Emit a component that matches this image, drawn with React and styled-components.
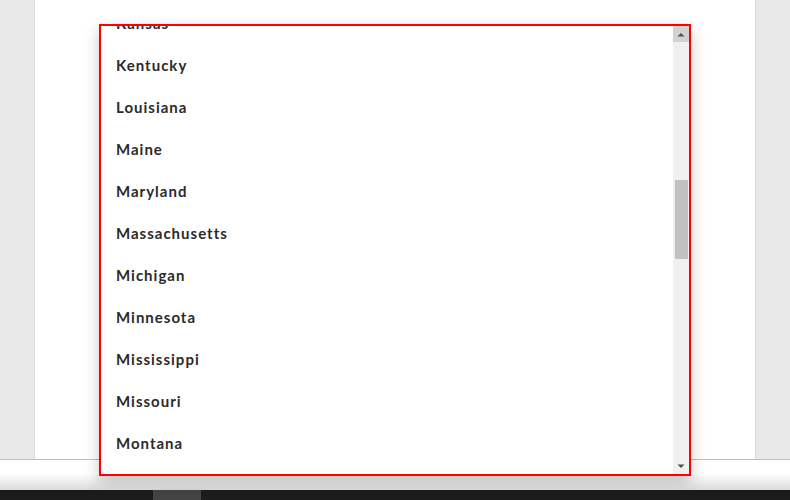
import React, { useLayoutEffect, useRef } from "react";
import styled, { createGlobalStyle } from "styled-components";

const Global = createGlobalStyle`
  html, body { margin: 0; padding: 0; }
  body { width: 790px; height: 500px; overflow: hidden; background: #ffffff; font-family: Lato, "Liberation Sans", sans-serif; }
`;

const Page = styled.div`
  position: relative;
  width: 790px;
  height: 500px;
  display: flex;
  flex-direction: column;
`;

const Stage = styled.div`
  height: 459px;
  background: #e9e9e9;
  display: flex;
  justify-content: center;
  border-bottom: 1px solid #bdbdbd;
`;

const Panel = styled.div`
  width: 720px;
  background: #ffffff;
  box-shadow: -1px 0 0 #dcdcdc, 1px 0 0 #dcdcdc;
`;

const Strip = styled.div`
  height: 30px;
  background: linear-gradient(to bottom, #ffffff 0%, #ffffff 45%, #dadada 100%);
`;

const Footer = styled.div`
  height: 10px;
  background: #1c1c1c;
  display: flex;
  padding-left: 153px;
`;

const FooterTab = styled.div`
  width: 48px;
  background: #444444;
`;

const Dropdown = styled.div`
  position: absolute;
  left: 99px;
  top: 24px;
  width: 588px;
  height: 448px;
  border: 2px solid #ff0000;
  background: #ffffff;
  box-shadow: 0 6px 14px rgba(0, 0, 0, 0.22);
  display: flex;
`;

const List = styled.ul`
  flex: 1;
  margin: 0;
  padding: 0;
  list-style: none;
  height: 100%;
  overflow: hidden;
`;

const Item = styled.li`
  height: 42px;
  display: flex;
  align-items: center;
  padding-left: 15px;
  font-family: Lato, "Liberation Sans", sans-serif;
  font-weight: 700;
  font-size: 15px;
  letter-spacing: 1px;
  color: #2b2b2b;
`;

const Scrollbar = styled.div`
  width: 16px;
  height: 100%;
  background: #f0f0f0;
  display: flex;
  flex-direction: column;
`;

const ArrowButton = styled.div`
  height: 16px;
  flex: none;
  display: flex;
  align-items: center;
  justify-content: center;
  background: ${(p) => (p.$active ? "#d2d2d2" : "#f0f0f0")};
`;

const Track = styled.div`
  flex: 1;
  position: relative;
`;

const Thumb = styled.div`
  position: absolute;
  left: 2px;
  right: 1px;
  background: #c1c1c1;
`;

const STATES = [
  "Alabama", "Alaska", "American Samoa", "Arizona", "Arkansas", "California",
  "Colorado", "Connecticut", "Delaware", "District of Columbia", "Florida",
  "Georgia", "Guam", "Hawaii", "Idaho", "Illinois", "Indiana", "Iowa", "Kansas",
  "Kentucky", "Louisiana", "Maine", "Maryland", "Massachusetts", "Michigan",
  "Minnesota", "Mississippi", "Missouri", "Montana", "Nebraska", "Nevada",
  "New Hampshire", "New Jersey", "New Mexico", "New York", "North Carolina",
  "North Dakota", "Northern Mariana Islands", "Ohio", "Oklahoma", "Oregon",
  "Pennsylvania", "Puerto Rico", "Rhode Island", "South Carolina", "South Dakota",
  "Tennessee", "Texas", "Utah", "Vermont", "Virgin Islands", "Virginia",
  "Washington", "West Virginia", "Wisconsin", "Wyoming",
];

const ITEM_H = 42;
const VIEW_H = 448;
const SCROLL = 780;
const TRACK_H = VIEW_H - 32;
const CONTENT_H = STATES.length * ITEM_H;
const THUMB_H = Math.round((TRACK_H * VIEW_H) / CONTENT_H);
const THUMB_TOP = Math.round(((TRACK_H - THUMB_H) * SCROLL) / (CONTENT_H - VIEW_H));

export default function App() {
  const listRef = useRef(null);
  useLayoutEffect(() => {
    if (listRef.current) listRef.current.scrollTop = SCROLL;
  }, []);
  return (
    <>
      <Global />
      <Page>
        <Stage>
          <Panel />
        </Stage>
        <Strip />
        <Footer>
          <FooterTab />
        </Footer>
        <Dropdown>
          <List ref={listRef}>
            {STATES.map((s) => (
              <Item key={s}>{s}</Item>
            ))}
          </List>
          <Scrollbar>
            <ArrowButton $active>
              <svg width="8" height="5" viewBox="0 0 8 5">
                <path d="M0.5 4.5 L4 1 L7.5 4.5 Z" fill="#505050" />
              </svg>
            </ArrowButton>
            <Track>
              <Thumb style={{ top: THUMB_TOP, height: THUMB_H }} />
            </Track>
            <ArrowButton>
              <svg width="8" height="5" viewBox="0 0 8 5">
                <path d="M0.5 0.5 L4 4 L7.5 0.5 Z" fill="#505050" />
              </svg>
            </ArrowButton>
          </Scrollbar>
        </Dropdown>
      </Page>
    </>
  );
}
